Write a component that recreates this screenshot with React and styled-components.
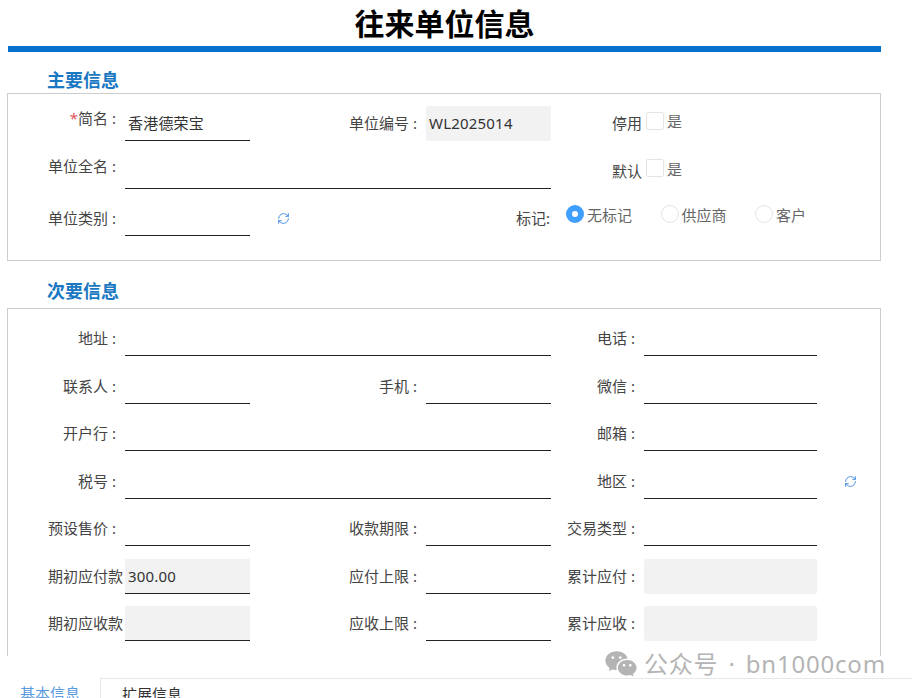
import React from "react";
import styled, { createGlobalStyle } from "styled-components";
import { RiWechatFill } from "react-icons/ri";
import { RefreshCw } from "lucide-react";

const GlobalStyle = createGlobalStyle`
  html, body {
    margin: 0;
    padding: 0;
    background: #fff;
  }
  body {
    font-family: "Noto Sans", "Noto Sans CJK SC", sans-serif;
    font-size: 15px;
    color: #444;
  }
`;

const Page = styled.div`
  position: relative;
  width: 912px;
  height: 698px;
  overflow: hidden;
`;

const Main = styled.div`
  height: 656px;
  overflow: hidden;
`;

const Title = styled.h1`
  margin: 0 31px 0 8px;
  height: 46px;
  border-bottom: 6px solid #0772ce;
  font-size: 30px;
  line-height: 47px;
  font-weight: 700;
  text-align: center;
  color: #000;
`;

const Heading = styled.h2`
  margin: ${(p) => p.$top}px 0 ${(p) => p.$bottom}px 47px;
  height: 25px;
  font-size: 18px;
  line-height: 25px;
  font-weight: 700;
  color: #1a78c2;
`;

const Panel = styled.section`
  box-sizing: border-box;
  width: 874px;
  height: ${(p) => p.$height}px;
  margin-left: 7px;
  padding-top: 12px;
  border: 1px solid #ccc;
  display: grid;
  grid-template-columns: 117px 125px 176px 125px 93px 173px 63px;
  grid-auto-rows: 35px;
  row-gap: 12.5px;
  align-content: start;
`;

const Label = styled.label`
  display: flex;
  align-items: center;
  justify-content: flex-end;
  white-space: nowrap;
  padding-right: ${(p) => p.$right ?? 9}px;
  padding-bottom: ${(p) => p.$raise ?? 2}px;
  color: #444;
`;

const Star = styled.span`
  color: #e0555f;
`;

const Field = styled.div`
  box-sizing: border-box;
  grid-column: ${(p) => (p.$wide ? "span 3" : "auto")};
  padding-left: 3px;
  line-height: 35px;
  letter-spacing: 0.2px;
  color: #333;
  white-space: nowrap;
  background: ${(p) => (p.$filled ? "#f2f2f2" : "transparent")};
  border-bottom: 1px solid ${(p) => (p.$plain ? "transparent" : "#222")};
  border-radius: ${(p) => (p.$plain ? "2px" : "0")};
`;

const Filler = styled.div`
  grid-column: span ${(p) => p.$span ?? 1};
`;

const IconCell = styled.div`
  display: flex;
  align-items: center;
  padding-left: 27px;
  color: #4a90e2;
`;

const Choice = styled.div`
  display: flex;
  align-items: center;
  gap: 3px;
  margin-left: 2px;
  padding-bottom: 6px;
  color: #666;
`;

const Check = styled.span`
  box-sizing: border-box;
  width: 18px;
  height: 18px;
  border: 1px solid #e4e4e4;
  border-radius: 2px;
`;

const RadioGroup = styled.div`
  grid-column: span 3;
  display: flex;
  align-items: center;
  gap: 28.5px;
  padding: 0 0 9px 15px;
  color: #666;
`;

const RadioItem = styled.span`
  display: flex;
  align-items: center;
  gap: 3px;
`;

const Radio = styled.span`
  box-sizing: border-box;
  width: 18px;
  height: 18px;
  border-radius: 50%;
  border: ${(p) => (p.$on ? "6px solid #409eff" : "1px solid #e4e4e4")};
  background: #fff;
`;

const TabBar = styled.div`
  display: flex;
  height: 20px;
  margin-top: 22px;
`;

const Tab = styled.div`
  box-sizing: border-box;
  padding: 5px 20px 0 ${(p) => (p.$active ? 20 : 21)}px;
  line-height: 20px;
  flex: ${(p) => (p.$active ? "0 0 101px" : "1")};
  color: ${(p) => (p.$active ? "#5a9be0" : "#333")};
  border-right: ${(p) => (p.$active ? "1px solid #e8e8e8" : "0")};
  border-top: ${(p) => (p.$active ? "0" : "1px solid #e8e8e8")};
`;

const Watermark = styled.div`
  position: absolute;
  left: 604px;
  top: 647px;
  display: flex;
  align-items: center;
  gap: 6px;
  font-size: 24px;
  line-height: 30px;
  letter-spacing: 0.8px;
  word-spacing: 3px;
  color: #b4b4b4;
  white-space: nowrap;
`;

const Refresh = () => <RefreshCw size={13} strokeWidth={1.8} />;

export default function App() {
  return (
    <Page>
      <GlobalStyle />
      <Main>
        <Title>往来单位信息</Title>

        <Heading $top={16} $bottom={0}>主要信息</Heading>
        <Panel $height={168}>
          <Label $raise={12}><Star>*</Star>简名 :</Label>
          <Field>香港德荣宝</Field>
          <Label>单位编号 :</Label>
          <Field $filled $plain>WL2025014</Field>
          <Label $right={2}>停用</Label>
          <Choice><Check />是</Choice>
          <Filler />

          <Label $raise={12}>单位全名 :</Label>
          <Field $wide />
          <Label $right={2}>默认</Label>
          <Choice><Check />是</Choice>
          <Filler />

          <Label>单位类别 :</Label>
          <Field />
          <IconCell><Refresh /></IconCell>
          <Label $right={1}>标记:</Label>
          <RadioGroup>
            <RadioItem><Radio $on />无标记</RadioItem>
            <RadioItem><Radio />供应商</RadioItem>
            <RadioItem><Radio />客户</RadioItem>
          </RadioGroup>
        </Panel>

        <Heading $top={18} $bottom={4}>次要信息</Heading>
        <Panel $height={400}>
          <Label>地址 :</Label>
          <Field $wide />
          <Label>电话 :</Label>
          <Field />
          <Filler />

          <Label>联系人 :</Label>
          <Field />
          <Label>手机 :</Label>
          <Field />
          <Label>微信 :</Label>
          <Field />
          <Filler />

          <Label>开户行 :</Label>
          <Field $wide />
          <Label>邮箱 :</Label>
          <Field />
          <Filler />

          <Label>税号 :</Label>
          <Field $wide />
          <Label>地区 :</Label>
          <Field />
          <IconCell><Refresh /></IconCell>

          <Label>预设售价 :</Label>
          <Field />
          <Label>收款期限 :</Label>
          <Field />
          <Label>交易类型 :</Label>
          <Field />
          <Filler />

          <Label $right={2}>期初应付款</Label>
          <Field $filled>300.00</Field>
          <Label>应付上限 :</Label>
          <Field />
          <Label>累计应付 :</Label>
          <Field $filled $plain />
          <Filler />

          <Label $right={2}>期初应收款</Label>
          <Field $filled />
          <Label>应收上限 :</Label>
          <Field />
          <Label>累计应收 :</Label>
          <Field $filled $plain />
          <Filler />
        </Panel>
      </Main>

      <TabBar>
        <Tab $active>基本信息</Tab>
        <Tab>扩展信息</Tab>
      </TabBar>

      <Watermark>
        <RiWechatFill size={34} />
        <span>公众号 · bn1000com</span>
      </Watermark>
    </Page>
  );
}
